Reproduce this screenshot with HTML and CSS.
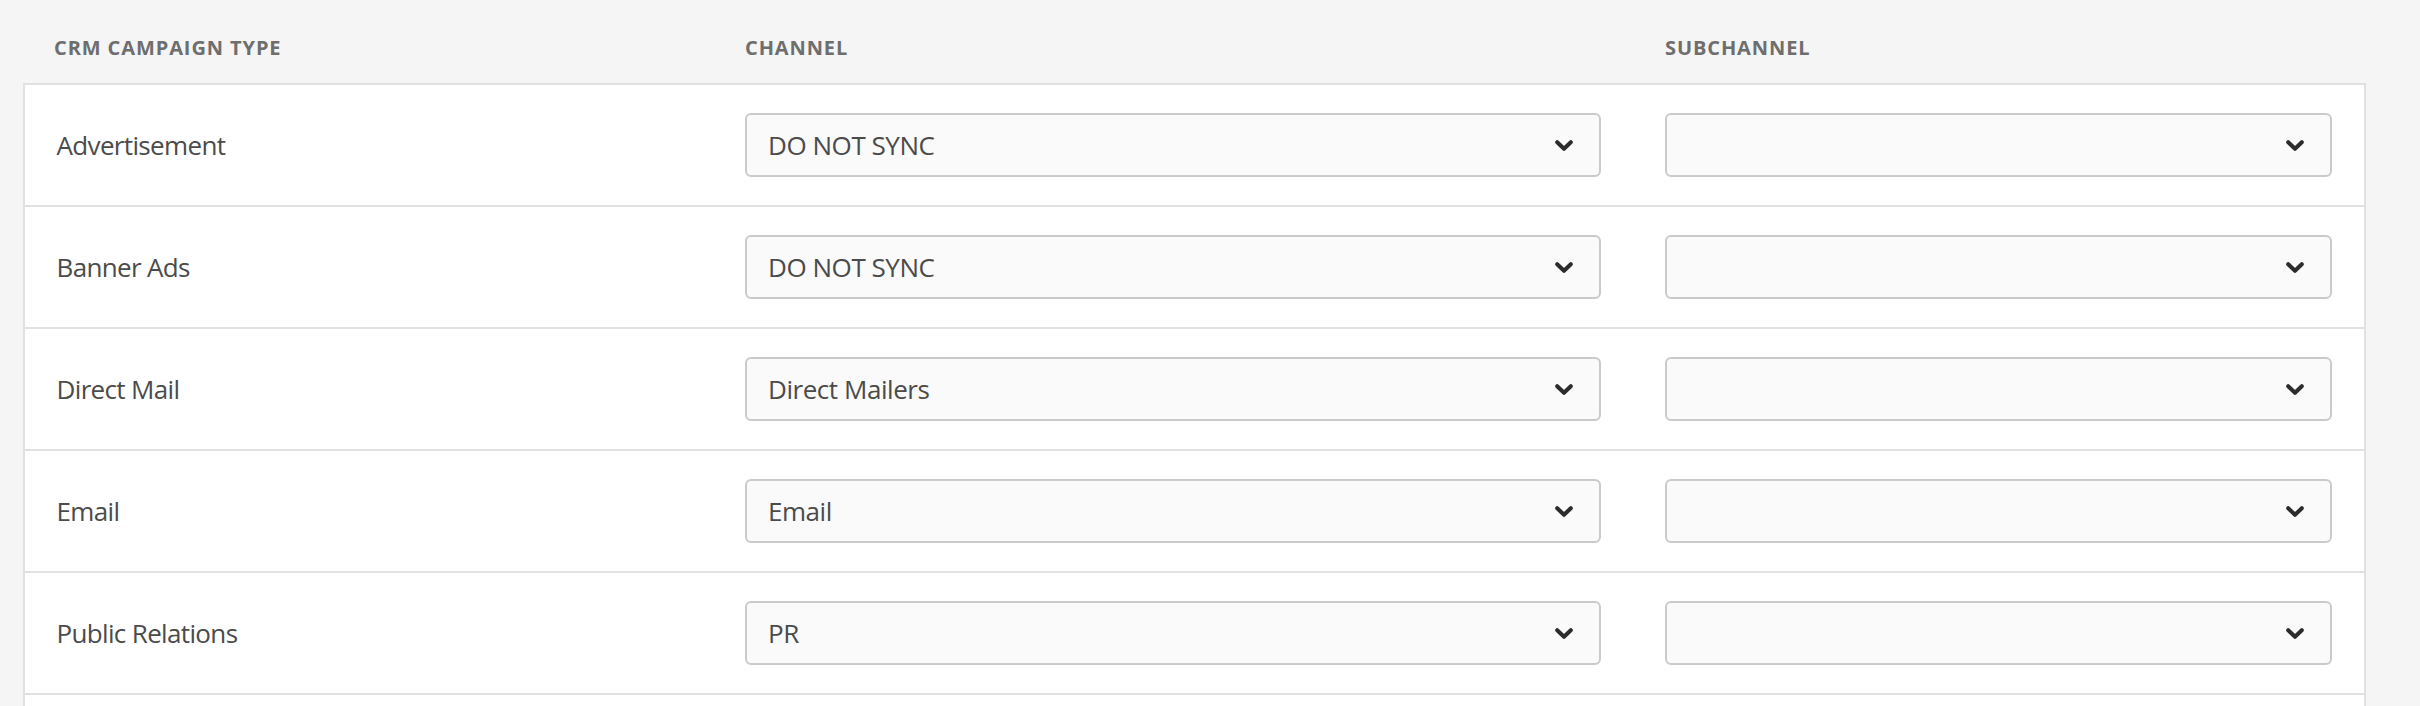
FILE: index.html
```html
<!DOCTYPE html>
<html lang="en">
<head>
<meta charset="utf-8">
<title>CRM Campaign Type Mapping</title>
<link rel="stylesheet" href="styles.css">
</head>
<body>
<div class="mapping">
  <div class="head">
    <div class="hcell first">CRM Campaign Type</div>
    <div class="hcell">Channel</div>
    <div class="hcell">Subchannel</div>
  </div>
  <div class="table">
    <div class="row">
      <div class="cell label">Advertisement</div>
      <div class="cell"><div class="picker"><span class="val">DO NOT SYNC</span><svg class="chev" viewBox="0 0 18 11"><polyline points="2.2,2.2 9,8.8 15.8,2.2"/></svg></div></div>
      <div class="cell"><div class="picker"><span class="val"></span><svg class="chev" viewBox="0 0 18 11"><polyline points="2.2,2.2 9,8.8 15.8,2.2"/></svg></div></div>
    </div>
    <div class="row">
      <div class="cell label">Banner Ads</div>
      <div class="cell"><div class="picker"><span class="val">DO NOT SYNC</span><svg class="chev" viewBox="0 0 18 11"><polyline points="2.2,2.2 9,8.8 15.8,2.2"/></svg></div></div>
      <div class="cell"><div class="picker"><span class="val"></span><svg class="chev" viewBox="0 0 18 11"><polyline points="2.2,2.2 9,8.8 15.8,2.2"/></svg></div></div>
    </div>
    <div class="row">
      <div class="cell label">Direct Mail</div>
      <div class="cell"><div class="picker"><span class="val">Direct Mailers</span><svg class="chev" viewBox="0 0 18 11"><polyline points="2.2,2.2 9,8.8 15.8,2.2"/></svg></div></div>
      <div class="cell"><div class="picker"><span class="val"></span><svg class="chev" viewBox="0 0 18 11"><polyline points="2.2,2.2 9,8.8 15.8,2.2"/></svg></div></div>
    </div>
    <div class="row">
      <div class="cell label">Email</div>
      <div class="cell"><div class="picker"><span class="val">Email</span><svg class="chev" viewBox="0 0 18 11"><polyline points="2.2,2.2 9,8.8 15.8,2.2"/></svg></div></div>
      <div class="cell"><div class="picker"><span class="val"></span><svg class="chev" viewBox="0 0 18 11"><polyline points="2.2,2.2 9,8.8 15.8,2.2"/></svg></div></div>
    </div>
    <div class="row">
      <div class="cell label">Public Relations</div>
      <div class="cell"><div class="picker"><span class="val">PR</span><svg class="chev" viewBox="0 0 18 11"><polyline points="2.2,2.2 9,8.8 15.8,2.2"/></svg></div></div>
      <div class="cell"><div class="picker"><span class="val"></span><svg class="chev" viewBox="0 0 18 11"><polyline points="2.2,2.2 9,8.8 15.8,2.2"/></svg></div></div>
    </div>
  </div>
</div>
</body>
</html>
```
FILE: styles.css
```css
html, body {
  margin: 0;
  padding: 0;
  height: 706px;
  overflow: hidden;
  background: #f5f5f5;
}
body {
  font-family: "Open Sans", "Noto Sans", sans-serif;
  color: #4b4b4b;
}
.mapping {
  margin-left: 23px;
  width: 2343px;
}
.head,
.row {
  display: grid;
  grid-template-columns: 688px 920px 1fr;
}
.head {
  box-sizing: border-box;
  height: 83px;
  padding: 38px 2px 0;
}
.hcell {
  padding: 0 32px;
  font-size: 20px;
  line-height: 20px;
  font-weight: 700;
  letter-spacing: 0.9px;
  text-transform: uppercase;
  color: #6e6e6e;
}
.hcell.first {
  padding-left: 29px;
}
.table {
  background: #fff;
  border: 2px solid #e1e1e1;
  padding-bottom: 40px;
}
.row {
  height: 120px;
  border-bottom: 2px solid #e1e1e1;
}
.cell {
  display: flex;
  align-items: center;
  padding: 0 32px;
  min-width: 0;
}
.label {
  padding-left: 31.5px;
  font-size: 26px;
  letter-spacing: -0.65px;
}
.picker {
  box-sizing: border-box;
  flex: 1;
  height: 64px;
  display: flex;
  align-items: center;
  justify-content: space-between;
  padding: 0 26px 0 21px;
  background: #fafafa;
  border: 2px solid #cacaca;
  border-radius: 6px;
  font-size: 26px;
  letter-spacing: -0.45px;
  color: #4b4b4b;
}
.chev {
  width: 18px;
  height: 11px;
  flex: none;
}
.chev polyline {
  fill: none;
  stroke: #2c2c2c;
  stroke-width: 4;
  stroke-linecap: round;
  stroke-linejoin: round;
}
```
